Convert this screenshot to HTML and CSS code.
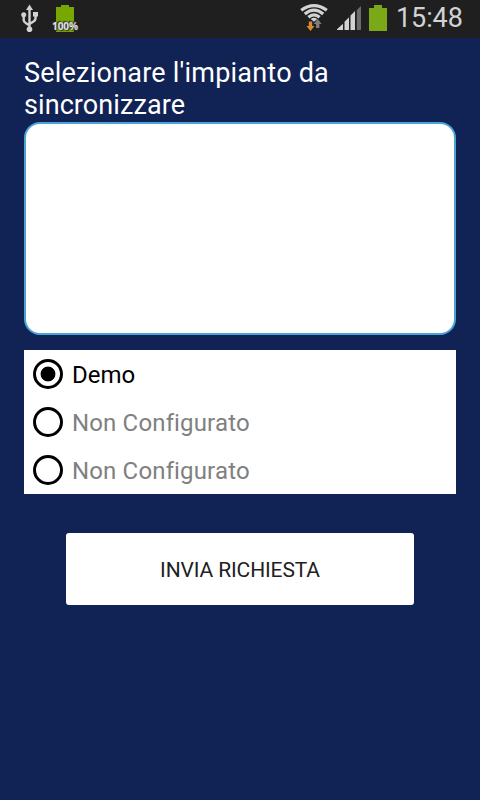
FILE: index.html
```html
<!DOCTYPE html>
<html lang="it">
<head>
<meta charset="utf-8">
<title>Sincronizzazione</title>
<link rel="stylesheet" href="styles.css">
</head>
<body>
<header class="status">
  <svg class="usb" width="20" height="30" viewBox="0 0 20 30" fill="none" stroke="#d2d2d2" stroke-width="2.400">
    <path d="M9.500 4v20M3.700 13v3q0 2 2 3L9.500 21.500M15.500 12v2.500q0 2-2 3L9.500 20"/>
    <path d="M9.500 .500l3.500 5.500H6z" fill="#d2d2d2" stroke="none"/>
    <circle cx="9.500" cy="25.300" r="2.800" fill="#d2d2d2" stroke="none"/>
    <circle cx="3.700" cy="10.800" r="2.500" fill="#d2d2d2" stroke="none"/>
    <path d="M13 8h5v4.500h-5z" fill="#d2d2d2" stroke="none"/>
  </svg>
  <div class="charge">
    <svg width="28" height="30" viewBox="0 0 28 30"><path d="M10 2h8v2h5v25H5V4h5z" fill="#78a800"/></svg>
    <span class="percent">100%</span>
  </div>
  <svg class="wifi" width="28" height="32" viewBox="0 0 28 32">
    <g fill="none" stroke="#d2d2d2" stroke-width="3.200">
      <path d="M1.200 10.300Q14 .800 26.800 10.300"/>
      <path d="M4.800 14Q14 6.200 23.200 14"/>
      <path d="M8.400 17.300Q14 12.400 19.600 17.300"/>
    </g>
    <path d="M10.700 19q3.300-2.600 6.600 0l-3.300 2.800z" fill="#d2d2d2"/>
    <path d="M8.800 21.500h3.400V26h2.300l-4 5-4-5h2.300z" fill="#d88a2d"/>
    <path d="M16 28v-4h-2.300l4-5 4 5h-2.300v4z" fill="#7d7d7d"/>
  </svg>
  <svg class="signal" width="24" height="23" viewBox="0 0 24 23">
    <path d="M0 23v-.800l6-5.500V23zM7.500 23v-8.300l4.500-4.500V23zM13.500 23V8.500l4.500-4.500v19z" fill="#d2d2d2"/>
    <path d="M19.800 23V3L24-1v24z" fill="#6b6b6b"/>
  </svg>
  <svg class="battery" width="18" height="26" viewBox="0 0 18 26"><path d="M5 0h8v3h5v23H0V3h5z" fill="#7aa817"/></svg>
  <time class="clock">15:48</time>
</header>
<main class="screen">
  <h1 class="title">Selezionare l'impianto da <span class="second">sincronizzare</span></h1>
  <div class="panel"></div>
  <div class="choices" role="radiogroup">
    <div class="choice" role="radio" aria-checked="true"><span class="ring checked"></span><span class="label">Demo</span></div>
    <div class="choice disabled" role="radio" aria-checked="false"><span class="ring"></span><span class="label">Non Configurato</span></div>
    <div class="choice disabled" role="radio" aria-checked="false"><span class="ring"></span><span class="label">Non Configurato</span></div>
  </div>
  <button class="send"><span>INVIA RICHIESTA</span></button>
</main>
</body>
</html>
```
FILE: styles.css
```css
* { box-sizing: border-box; }
body {
  margin: 0;
  height: 800px;
  overflow: hidden;
  background: #112254;
  font-family: Roboto, "Liberation Sans", sans-serif;
}
.status {
  display: flex;
  align-items: flex-start;
  height: 38px;
  padding-left: 20px;
  background: #1f1f1f;
  color: #d2d2d2;
}
.usb { margin-top: 4px; }
.charge { position: relative; width: 28px; margin: 3px 0 0 11px; }
.charge svg { display: block; }
.percent {
  position: absolute;
  left: 0;
  top: 17px;
  width: 28px;
  font: bold 10px/13px "Open Sans", sans-serif;
  letter-spacing: -0.1px;
  text-align: center;
  color: #e2e2e2;
  text-shadow: 0 0 2px #333, 1px 1px 1px #333, -1px -1px 1px #333;
}
.wifi { margin-left: 221px; }
.signal { margin: 7px 0 0 9px; overflow: visible; }
.battery { margin: 5px 0 0 8px; }
.clock {
  margin-left: 9px;
  font-size: 27px;
  line-height: 36px;
  letter-spacing: -0.1px;
}
.screen { padding: 19px 24px 0; display: flex; flex-direction: column; }
.title {
  margin: 0;
  width: 340px;
  font-size: 27px;
  font-weight: 400;
  line-height: 32px;
  letter-spacing: 0.22px;
  color: #fff;
}
.second { letter-spacing: 0.08px; }
.panel {
  height: 213px;
  margin-top: 1px;
  background: #fff;
  border: 2px solid #4aa4d8;
  border-radius: 16px;
}
.choices { margin-top: 15px; background: #fff; }
.choice {
  display: flex;
  align-items: center;
  height: 48px;
  padding-left: 9px;
  font-size: 24px;
  color: #000;
}
.disabled { color: #808080; }
.disabled .label { letter-spacing: 0.15px; }
.ring {
  width: 30px;
  height: 30px;
  margin-right: 9px;
  border: 3px solid #000;
  border-radius: 50%;
}
.checked { background: radial-gradient(circle, #000 7px, #fff 7.8px); }
.label { line-height: 28px; padding-top: 1px; }
.send {
  align-self: center;
  width: 348px;
  height: 72px;
  margin-top: 39px;
  padding: 2px 0 0;
  border: 0;
  border-radius: 3px;
  background: #fff;
  color: #212121;
  font: 400 21px/24px Roboto, sans-serif;
  letter-spacing: -0.12px;
}
```
